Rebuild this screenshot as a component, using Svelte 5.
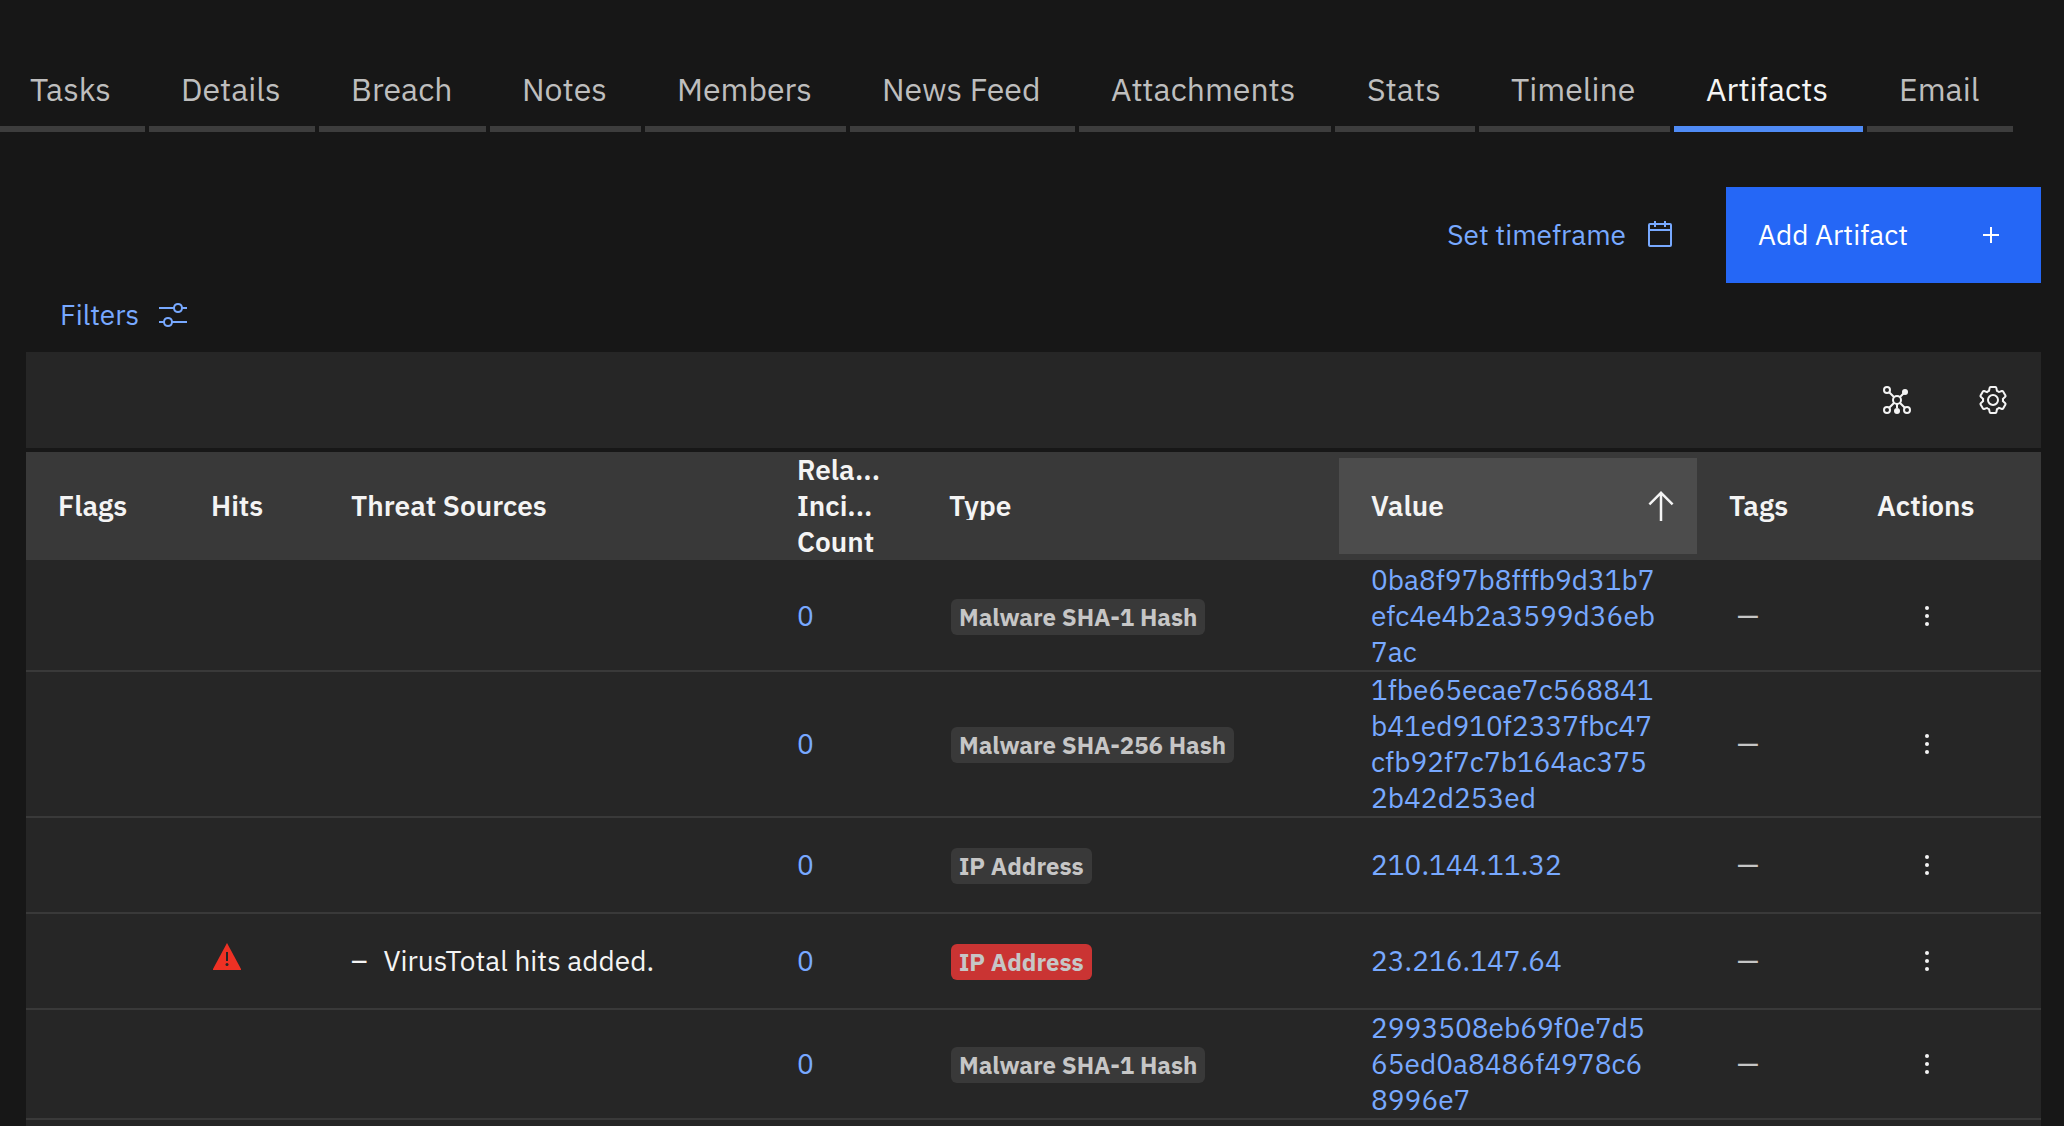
<script>
  const tabs = [
    { label: 'Tasks', span: 145 },
    { label: 'Details', span: 166 },
    { label: 'Breach', span: 167 },
    { label: 'Notes', span: 151 },
    { label: 'Members', span: 201 },
    { label: 'News Feed', span: 225 },
    { label: 'Attachments', span: 252 },
    { label: 'Stats', span: 140 },
    { label: 'Timeline', span: 191 },
    { label: 'Artifacts', span: 189 },
    { label: 'Email', span: 146 }
  ];
  let active = $state('Artifacts');

  const columns = [153, 140, 446, 152, 422, 358, 148, 196];
  const total = columns.reduce((a, b) => a + b, 0);

  const rows = [
    { type: 'Malware SHA-1 Hash', value: ['0ba8f97b8fffb9d31b7', 'efc4e4b2a3599d36eb', '7ac'] },
    { type: 'Malware SHA-256 Hash', value: ['1fbe65ecae7c568841', 'b41ed910f2337fbc47', 'cfb92f7c7b164ac375', '2b42d253ed'] },
    { type: 'IP Address', value: ['210.144.11.32'] },
    { type: 'IP Address', value: ['23.216.147.64'], hit: 'VirusTotal hits added.' },
    { type: 'Malware SHA-1 Hash', value: ['2993508eb69f0e7d5', '65ed0a8486f4978c6', '8996e7'] },
    { type: '', value: [] }
  ];
</script>

<div class="page">
  <div class="tabs" role="tablist">
    {#each tabs as tab}
      <button
        class="tab"
        class:active={active === tab.label}
        role="tab"
        aria-selected={active === tab.label}
        style:flex-grow={tab.span}
        onclick={() => (active = tab.label)}><span>{tab.label}</span></button>
    {/each}
  </div>

  <main>
    <div class="commands">
      <button class="ghost">
        Set timeframe
        <svg viewBox="0 0 32 32" aria-hidden="true"><path d="M26 4h-4V2h-2v2h-8V2h-2v2H6a2 2 0 0 0-2 2v20a2 2 0 0 0 2 2h20a2 2 0 0 0 2-2V6a2 2 0 0 0-2-2Zm0 22H6V12h20Zm0-16H6V6h4v2h2V6h8v2h2V6h4Z" /></svg>
      </button>
      <button class="primary">
        Add Artifact
        <svg viewBox="0 0 32 32" aria-hidden="true"><path d="M17 15V8h-2v7H8v2h7v7h2v-7h7v-2Z" /></svg>
      </button>
    </div>

    <div class="filters">
      <button class="ghost">
        Filters
        <svg viewBox="0 0 32 32" aria-hidden="true"><path d="M30 8h-4.1a5 5 0 0 0-9.8 0H2v2h14.1a5 5 0 0 0 9.8 0H30Zm-9 4a3 3 0 1 1 0-6 3 3 0 0 1 0 6ZM2 24h4.1a5 5 0 0 0 9.8 0H30v-2H15.9a5 5 0 0 0-9.8 0H2Zm9-4a3 3 0 1 1 0 6 3 3 0 0 1 0-6Z" /></svg>
      </button>
    </div>

    <div class="toolbar">
      <button class="icon" aria-label="Show graph">
        <svg viewBox="0 0 32 32" aria-hidden="true">
          <g fill="none" stroke="currentColor" stroke-width="2">
            <circle cx="6" cy="6" r="3" /><circle cx="16" cy="16" r="4" /><circle cx="6" cy="26" r="3" /><circle cx="26" cy="26" r="3" />
            <path d="m8.200 8.200 5 5M18.800 13.200 23 9M13.200 18.800l-5 5M18.800 18.800l5 5M16 20v4" />
          </g>
          <circle cx="24" cy="8" r="3" /><circle cx="16" cy="27" r="3" />
        </svg>
      </button>
      <button class="icon" aria-label="Settings">
        <svg viewBox="0 0 32 32" aria-hidden="true"><path d="M27 16.760v-1.530l1.920-1.680A2 2 0 0 0 29.300 11l-2.360-4a2 2 0 0 0-1.730-1 2 2 0 0 0-.64.100l-2.430.820a11.350 11.350 0 0 0-1.310-.750l-.51-2.520a2 2 0 0 0-2-1.610h-4.680a2 2 0 0 0-2 1.610l-.51 2.520a11.480 11.480 0 0 0-1.320.750l-2.380-.860A2 2 0 0 0 6.790 6a2 2 0 0 0-1.730 1L2.700 11a2 2 0 0 0 .41 2.510L5 15.240v1.530l-1.890 1.680A2 2 0 0 0 2.700 21l2.360 4a2 2 0 0 0 1.730 1 2 2 0 0 0 .64-.100l2.430-.820a11.350 11.350 0 0 0 1.310.750l.51 2.520a2 2 0 0 0 2 1.610h4.720a2 2 0 0 0 2-1.610l.51-2.520a11.480 11.480 0 0 0 1.320-.750l2.420.820a2 2 0 0 0 .64.100 2 2 0 0 0 1.730-1l2.280-4a2 2 0 0 0-.41-2.510ZM25.210 24l-3.430-1.160a8.860 8.860 0 0 1-2.710 1.570L18.360 28h-4.720l-.71-3.550a9.360 9.360 0 0 1-2.700-1.570L6.790 24l-2.360-4 2.720-2.400a8.900 8.900 0 0 1 0-3.130L4.430 12l2.360-4 3.430 1.160a8.860 8.860 0 0 1 2.710-1.570L13.640 4h4.720l.71 3.550a9.360 9.360 0 0 1 2.700 1.570L25.210 8l2.360 4-2.720 2.400a8.900 8.900 0 0 1 0 3.130L27.570 20ZM16 22a6 6 0 1 1 6-6 5.940 5.940 0 0 1-6 6Zm0-10a3.910 3.910 0 0 0-4 4 3.910 3.910 0 0 0 4 4 3.910 3.910 0 0 0 4-4 3.910 3.910 0 0 0-4-4Z" /></svg>
      </button>
    </div>

    <table>
      <colgroup>
        {#each columns as width}<col style:width="{(width / total) * 100}%" />{/each}
      </colgroup>
      <thead>
        <tr>
          <th>Flags</th>
          <th>Hits</th>
          <th>Threat Sources</th>
          <th>Rela...<br />Inci...<br />Count</th>
          <th><span class="clip">Type</span></th>
          <th class="flush" aria-sort="ascending">
            <button class="sort">
              Value
              <svg viewBox="0 0 32 32" aria-hidden="true"><path d="M16 4 6 14l1.410 1.410L15 7.830V28h2V7.830l7.590 7.580L26 14Z" /></svg>
            </button>
          </th>
          <th>Tags</th>
          <th>Actions</th>
        </tr>
      </thead>
      <tbody>
        {#each rows as row}
          <tr>
            <td></td>
            <td>
              {#if row.hit}
                <svg class="warning" viewBox="0 0 28 28" role="img" aria-label="Hit">
                  <path class="sign" d="M14 0 28 26v1H0v-1Z" />
                  <path d="M13 9h2v9h-2Z" /><circle cx="14" cy="21.500" r="1.500" />
                </svg>
              {/if}
            </td>
            <td>
              {#if row.hit}
                <ul><li><span>–</span>{row.hit}</li></ul>
              {/if}
            </td>
            {#if row.type}
              <td><a href="#incidents">0</a></td>
              <td><span class="tag" class:danger={row.hit}>{row.type}</span></td>
              <td><a href="#artifact">{#each row.value as line, i}{#if i}<br />{/if}{line}{/each}</a></td>
              <td><span class="none">—</span></td>
              <td class="flush">
                <button class="icon menu" aria-label="Row actions">
                  <svg viewBox="0 0 32 32" aria-hidden="true"><circle cx="16" cy="8" r="2" /><circle cx="16" cy="16" r="2" /><circle cx="16" cy="24" r="2" /></svg>
                </button>
              </td>
            {:else}
              <td colspan="5"></td>
            {/if}
          </tr>
        {/each}
      </tbody>
    </table>
  </main>
</div>

<style>
  :global(body) {
    background: #171717;
  }
  .page {
    height: 100vh;
    overflow: hidden;
    box-sizing: border-box;
    padding-top: 48px;
    color: #f4f4f4;
    font: 28px/36px 'IBM Plex Sans', Inter, sans-serif;
  }
  button {
    border: 0;
    margin: 0;
    padding: 0;
    background: none;
    color: inherit;
    font: inherit;
    text-align: left;
    white-space: nowrap;
    cursor: pointer;
  }
  svg {
    display: block;
    flex: none;
    width: 32px;
    height: 32px;
    fill: currentColor;
  }
  .tabs {
    display: flex;
    gap: 4px;
    padding-right: 51px;
  }
  .tab {
    flex: 1 1 0;
    width: 0;
    min-width: 0;
    border-bottom: 6px solid #3d3d3d;
    color: #bebebe;
    font-size: 32px;
    line-height: 42px;
  }
  .tab span {
    display: block;
    width: 0;
    margin: 20px 0 16px 32px;
  }
  .tab:first-child span {
    margin-left: 30px;
  }
  .tab.active {
    color: #f4f4f4;
    border-color: #4f8bf5;
  }
  main {
    padding: 55px 23px 0 26px;
  }
  .commands {
    display: flex;
    justify-content: flex-end;
    gap: 50px;
  }
  .ghost {
    display: flex;
    align-items: center;
    gap: 18px;
    color: #78a9ff;
  }
  .primary {
    display: flex;
    align-items: center;
    justify-content: space-between;
    box-sizing: border-box;
    width: 315px;
    height: 96px;
    padding: 0 34px 0 32px;
    background: #2567f6;
    color: #fff;
  }
  .filters {
    display: flex;
    padding: 14px 34px 19px;
  }
  .toolbar {
    display: flex;
    justify-content: flex-end;
    height: 96px;
    margin-bottom: 4px;
    background: #262626;
  }
  .icon {
    display: flex;
    align-items: center;
    justify-content: center;
    width: 96px;
  }
  table {
    width: 100%;
    table-layout: fixed;
    border-collapse: separate;
    border-spacing: 0;
    background: #262626;
  }
  th,
  td {
    box-sizing: border-box;
    padding: 0 0 0 32px;
    text-align: left;
    vertical-align: middle;
  }
  th {
    height: 108px;
    background: #393939;
    font-weight: 600;
  }
  td {
    height: 96px;
    border-bottom: 2px solid #393939;
  }
  tbody tr:first-child td {
    border-top: 2px solid #262626;
  }
  .flush {
    padding: 0;
  }
  .clip {
    display: block;
    overflow: hidden;
    line-height: 28px;
  }
  .sort {
    display: flex;
    align-items: center;
    justify-content: space-between;
    width: 100%;
    height: 96px;
    padding: 0 16px 0 32px;
    background: #4c4c4c;
  }
  .sort svg {
    width: 40px;
    height: 40px;
  }
  a {
    color: #78a9ff;
    text-decoration: none;
  }
  .tag {
    display: inline-block;
    margin-left: 2px;
    padding: 0 8px;
    border-radius: 6px;
    background: #393939;
    color: #c6c6c6;
    font-size: 24px;
    font-weight: 700;
    white-space: nowrap;
    vertical-align: middle;
  }
  .tag.danger {
    background: #ca3433;
  }
  .none {
    padding-left: 8px;
    color: #c6c6c6;
  }
  .warning {
    width: 28px;
    height: 28px;
    margin: 0 0 8px 2px;
    fill: #262626;
  }
  .warning .sign {
    fill: #ee3124;
  }
  ul {
    margin: 0;
    padding: 0;
    list-style: none;
  }
  li {
    display: flex;
    gap: 16px;
  }
  .menu {
    width: 164px;
    height: 64px;
  }
</style>
